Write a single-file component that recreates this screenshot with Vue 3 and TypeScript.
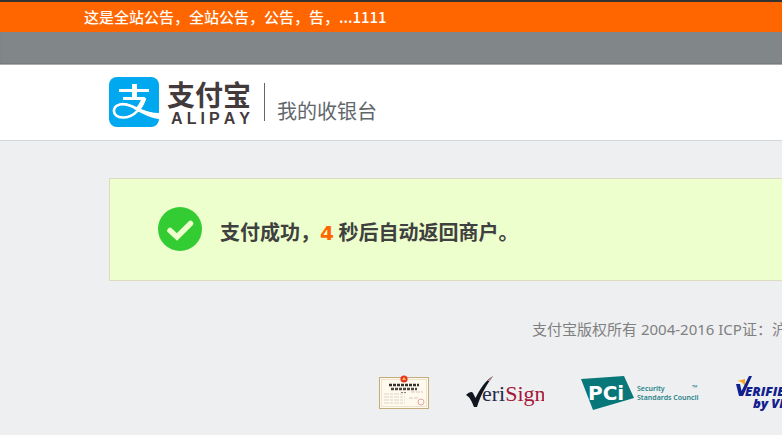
<script setup lang="ts">
import { ref } from 'vue'

const notice = ref<string>('这是全站公告，全站公告，公告，告，...1111')
const seconds = ref<number>(4)
const wordmark: string[] = ['A', 'L', 'I', 'P', 'A', 'Y']
const certLines: number[] = [19, 22, 25, 28]
</script>

<template>
  <div class="page">
    <div class="notice">{{ notice }}</div>
    <div class="topbar"></div>
    <header class="header">
      <a class="brand" href="#" aria-label="支付宝">
        <svg class="brand-icon" viewBox="0 0 50 50" aria-hidden="true">
          <rect width="50" height="50" rx="8" fill="#00a8f0" />
          <g fill="none" stroke="#fff">
            <path d="M10 13.500H40M14 21.500H36" stroke-width="2.800" />
            <path d="M25.500 7V21.500" stroke-width="5" />
            <path d="M36 21C33 30 26 40 15 40.500C8 41 4.500 37 5 33C6 27 14 25.500 22 29C31 33 39 37.500 50 38.500" stroke-width="2.600" />
            <path d="M35 21C33 27 31 30 28 33" stroke-width="4.500" />
          </g>
          <path d="M26 30C35 34 43 36 50 36V42C42 41 33 37 25 32Z" fill="#fff" />
        </svg>
        <span class="brand-name">
          <span class="brand-cn">支付宝</span>
          <span class="brand-en"><span v-for="(c, i) in wordmark" :key="i">{{ c }}</span></span>
        </span>
      </a>
      <span class="divider"></span>
      <h1 class="title">我的收银台</h1>
    </header>

    <main class="result">
      <svg class="check" viewBox="0 0 44 44" aria-hidden="true">
        <circle cx="22" cy="22" r="22" fill="#33cc33" />
        <path d="M12 23.500L19 30L32.500 16.500" fill="none" stroke="#edffcc" stroke-width="5.500" stroke-linecap="round" />
      </svg>
      <p class="message">支付成功，<strong class="count">{{ seconds }}</strong> 秒后自动返回商户。</p>
    </main>

    <footer class="footer">
      <p class="copyright">支付宝版权所有 2004-2016 ICP证：沪</p>
      <div class="badges">
        <a href="#" aria-label="营业执照">
          <svg class="badge" width="50" height="36" viewBox="0 0 50 36">
            <rect x=".5" y="2.500" width="49" height="31" fill="#fff9ee" stroke="#c4ab7c" />
            <rect x="2.500" y="4.500" width="45" height="27" fill="none" stroke="#efe3cc" />
            <circle cx="25" cy="4" r="3.600" fill="#e93426" />
            <path d="M23 5L25 2L27 5Z" fill="#ffc247" />
            <path d="M10 10H40" stroke="#34302c" stroke-width="2.500" stroke-dasharray="3 1" />
            <path d="M12 14H38" stroke="#4c463f" stroke-width="2.500" stroke-dasharray="3 1" />
            <path d="M22 17.500H28" stroke="#8a8177" stroke-dasharray="2 1" />
            <path v-for="y in certLines" :key="y" :d="`M5 ${y}H26`" stroke="#ddd3c5" stroke-dasharray="5 1 3 1" />
            <path d="M32 17H44M30 23H40" stroke="#d5cbbe" stroke-dasharray="4 1" />
            <circle cx="42" cy="27" r="3" fill="none" stroke="#e5a79b" />
          </svg>
        </a>
        <a href="#" aria-label="VeriSign">
          <svg class="badge" width="78" height="36" viewBox="0 0 78 36">
            <path d="M0 20C3 17 6 16 7 18L9.500 23C14 14 19 6 27 1C21 9 15 19 11 32H8C6 27 4 22 0 20Z" fill="#111620" />
            <path d="M21 6L27 1L24 6Z" fill="#b98b91" />
            <text x="16" y="26" class="verisign"><tspan fill="#222b45">eri</tspan><tspan fill="#a51637">Sign</tspan></text>
          </svg>
        </a>
        <a href="#" aria-label="PCI Security Standards Council">
          <svg class="badge" width="118" height="36" viewBox="0 0 118 36">
            <path d="M0 4L43 1L53 23L12 35Z" fill="#08777a" />
            <text x="7" y="25" class="pci-name">PCi</text>
            <text x="56" y="16" class="pci-text">Security</text>
            <text x="56" y="25" class="pci-text">Standards Council</text>
            <text x="111" y="15" class="tm">™</text>
          </svg>
        </a>
        <a href="#" aria-label="Verified by VISA">
          <svg class="badge" width="100" height="36" viewBox="0 0 100 36">
            <path d="M1 6L9 4L9 11Q6 6 1 6Z" fill="#f8a51b" />
            <path d="M0 9H4L5.500 16L13 1H16L7 21H3Z" fill="#10208e" />
            <text x="9" y="21" class="visa-text">ERIFIED</text>
            <text x="17" y="33" class="visa-text">by VISA</text>
          </svg>
        </a>
      </div>
    </footer>
  </div>
</template>

<style>
body {
  background: #eeeff1;
}
</style>

<style scoped>
.page {
  overflow: hidden;
  white-space: nowrap;
  font-family: "Noto Sans", "Noto Sans CJK SC", sans-serif;
  color: #404040;
}

.notice {
  border-top: 2px solid #333;
  padding-left: 84px;
  background: #ff6600;
  color: #fff;
  font-family: "Noto Sans CJK SC", sans-serif;
  font-size: 15px;
  font-weight: 500;
  line-height: 30px;
}

.topbar {
  height: 33px;
  background: #818689;
  box-sizing: border-box;
  border-bottom: 1px solid #a9adb0;
  box-shadow: inset 0 -1px 1px #777c7f;
}

.header {
  display: flex;
  align-items: flex-start;
  padding: 12px 0 13px 109px;
  background: #fff;
  border-bottom: 1px solid #d5d6d8;
}

.brand {
  display: flex;
  gap: 8px;
  color: #433b3b;
  text-decoration: none;
}

.brand-icon {
  width: 50px;
  height: 50px;
}

.brand-name {
  display: flex;
  flex-direction: column;
}

.brand-cn {
  font-family: "Noto Sans CJK SC", sans-serif;
  font-size: 28px;
  font-weight: 700;
  line-height: 34px;
}

.brand-en {
  display: flex;
  justify-content: space-between;
  padding: 0 1px 0 4px;
  font-family: "Liberation Sans", sans-serif;
  font-size: 16px;
  font-weight: 700;
  line-height: 16px;
}

.divider {
  width: 1px;
  height: 38px;
  margin: 6px 12px 0 13px;
  background: #5f676b;
}

.title {
  margin: 19px 0 0;
  font-family: "Noto Sans CJK SC", sans-serif;
  font-size: 20px;
  font-weight: 400;
  line-height: 30px;
  color: #5f676b;
}

.result {
  display: flex;
  align-items: center;
  gap: 18px;
  margin: 37px 0 0 109px;
  padding: 28px 0 29px 48px;
  border: 1px solid #dddcc2;
  border-right: 0;
  background: #edffcc;
}

.check {
  width: 44px;
  height: 44px;
}

.message {
  margin: 6px 0 0;
  font-family: "Noto Sans CJK SC", sans-serif;
  font-size: 20px;
  font-weight: 700;
  line-height: 30px;
}

.count {
  color: #ff6600;
  font-family: "DejaVu Sans", sans-serif;
}

.footer {
  margin-top: 36px;
}

.copyright {
  margin: 0;
  padding-left: 532px;
  font-size: 15px;
  line-height: 24px;
  color: #808080;
}

.badges {
  display: flex;
  gap: 37px;
  padding: 34px 0 24px 379px;
}

.badge {
  display: block;
}

.verisign {
  font-family: "Liberation Serif", serif;
  font-size: 22px;
}

.pci-name {
  fill: #fff;
  font-family: "DejaVu Sans", sans-serif;
  font-size: 20px;
  font-weight: 700;
}

.pci-text {
  fill: #258487;
  font-family: "Noto Sans", sans-serif;
  font-size: 7px;
  font-weight: 600;
}

.tm {
  fill: #258487;
  font-family: "Noto Sans", sans-serif;
  font-size: 7px;
}

.visa-text {
  fill: #10208e;
  font-family: "Open Sans", sans-serif;
  font-size: 13px;
  font-style: italic;
  font-weight: 800;
}
</style>
